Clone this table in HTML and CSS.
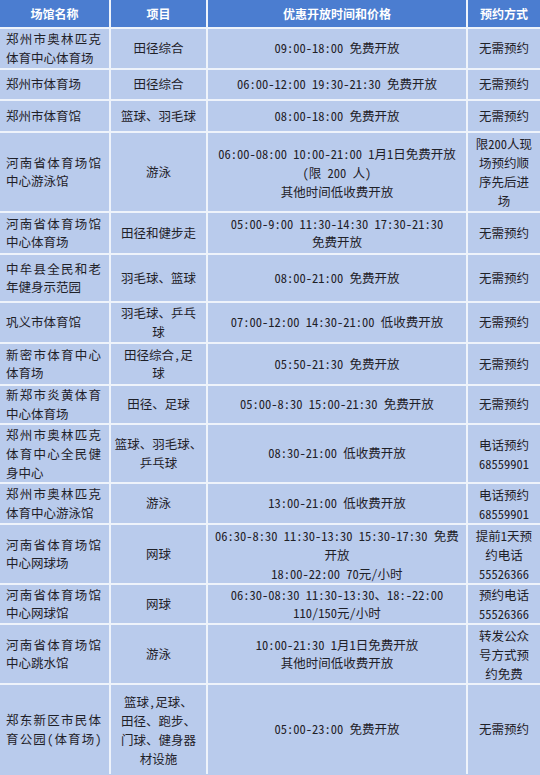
FILE: index.html
```html
<!DOCTYPE html>
<html lang="zh-CN">
<head>
<meta charset="utf-8">
<title>场馆开放</title>
<link rel="stylesheet" href="styles.css">
</head>
<body>
<table class="grid">
  <colgroup>
    <col class="c-name"><col class="c-item"><col class="c-time"><col class="c-book">
  </colgroup>
  <thead>
    <tr class="h28"><th>场馆名称</th><th>项目</th><th>优惠开放时间和价格</th><th>预约方式</th></tr>
  </thead>
  <tbody>
    <tr class="h41"><td class="name"><span class="j">郑州市奥林匹克</span>体育中心体育场</td><td>田径综合</td><td>09:00-18:00 免费开放</td><td>无需预约</td></tr>
    <tr class="h31"><td class="name">郑州市体育场</td><td>田径综合</td><td>06:00-12:00 19:30-21:30 免费开放</td><td>无需预约</td></tr>
    <tr class="h32"><td class="name">郑州市体育馆</td><td>篮球、羽毛球</td><td>08:00-18:00 免费开放</td><td>无需预约</td></tr>
    <tr class="h80"><td class="name"><span class="j">河南省体育场馆</span>中心游泳馆</td><td>游泳</td><td class="tall">06:00-08:00 10:00-21:00 1月1日免费开放<br>（限 200 人）<br>其他时间低收费开放</td><td class="book">限200人现<br>场预约顺<br>序先后进<br>场</td></tr>
    <tr class="h42"><td class="name"><span class="j">河南省体育场馆</span>中心体育场</td><td>田径和健步走</td><td>05:00-9:00 11:30-14:30 17:30-21:30<br>免费开放</td><td>无需预约</td></tr>
    <tr class="h48"><td class="name"><span class="j">中牟县全民和老</span>年健身示范园</td><td>羽毛球、篮球</td><td>08:00-21:00 免费开放</td><td>无需预约</td></tr>
    <tr class="h41"><td class="name">巩义市体育馆</td><td>羽毛球、乒乓<br>球</td><td>07:00-12:00 14:30-21:00 低收费开放</td><td>无需预约</td></tr>
    <tr class="h42"><td class="name"><span class="j">新密市体育中心</span>体育场</td><td>田径综合，足<br>球</td><td>05:50-21:30 免费开放</td><td>无需预约</td></tr>
    <tr class="h38"><td class="name"><span class="j">新郑市炎黄体育</span>中心体育场</td><td>田径、足球</td><td>05:00-8:30 15:00-21:30 免费开放</td><td>无需预约</td></tr>
    <tr class="h58"><td class="name tall"><span class="j">郑州市奥林匹克</span><span class="j">体育中心全民健</span>身中心</td><td>篮球、羽毛球、<br>乒乓球</td><td>08:30-21:00 低收费开放</td><td class="book">电话预约<br>68559901</td></tr>
    <tr class="h41"><td class="name"><span class="j">郑州市奥林匹克</span>体育中心游泳馆</td><td>游泳</td><td>13:00-21:00 低收费开放</td><td class="book">电话预约<br>68559901</td></tr>
    <tr class="h60"><td class="name"><span class="j">河南省体育场馆</span>中心网球场</td><td>网球</td><td class="tall">06:30-8:30 11:30-13:30 15:30-17:30 免费<br>开放<br>18:00-22:00 70元/小时</td><td class="book">提前1天预<br>约电话<br>55526366</td></tr>
    <tr class="h40"><td class="name"><span class="j">河南省体育场馆</span>中心网球馆</td><td>网球</td><td>06:30-08:30 11:30-13:30、18:-22:00<br>110/150元/小时</td><td class="book">预约电话<br>55526366</td></tr>
    <tr class="h60"><td class="name"><span class="j">河南省体育场馆</span>中心跳水馆</td><td>游泳</td><td>10:00-21:30 1月1日免费开放<br>其他时间低收费开放</td><td class="book">转发公众<br>号方式预<br>约免费</td></tr>
    <tr class="h90"><td class="name"><span class="j">郑东新区市民体</span><span class="j tight">育公园（体育场）</span></td><td class="tall">篮球，足球、<br>田径、跑步、<br>门球、健身器<br>材设施</td><td>05:00-23:00 免费开放</td><td>无需预约</td></tr>
  </tbody>
</table>
</body>
</html>
```

FILE: styles.css
```css
html, body {
  margin: 0;
  padding: 0;
  background: #b9cbec;
}

.grid {
  width: 540px;
  table-layout: fixed;
  border-collapse: collapse;
  border-style: hidden;
  font-family: "Noto Sans CJK SC", "Liberation Sans", sans-serif;
  font-size: 12.5px;
  line-height: 18.5px;
  color: #1f2128;
  font-feature-settings: "hwid";
  background: #b9cbec;
}

.c-name { width: 110px; }
.c-item { width: 97px; }
.c-time { width: 260px; }
.c-book { width: 73px; }

.grid th,
.grid td {
  border: 2px solid #eef3fb;
  padding: 0 3px;
  text-align: center;
  vertical-align: middle;
  white-space: nowrap;
}

.grid th {
  background: #4b7dd0;
  color: #ffffff;
  font-weight: 700;
  font-size: 12px;
  line-height: 16px;
}

.grid td.name {
  text-align: left;
  padding: 0 8px 0 6px;
}

.grid td.book {
  line-height: 19px;
}

.grid td.tall {
  line-height: 19px;
}

.j {
  display: block;
  text-align: justify;
  text-align-last: justify;
}

.tight {
  letter-spacing: -0.6px;
}

.h28 { height: 28px; }
.h31 { height: 31px; }
.h32 { height: 32px; }
.h38 { height: 38px; }
.h40 { height: 40px; }
.h41 { height: 41px; }
.h42 { height: 42px; }
.h48 { height: 48px; }
.h58 { height: 58px; }
.h60 { height: 60px; }
.h80 { height: 80px; }
.h90 { height: 90px; }
```
